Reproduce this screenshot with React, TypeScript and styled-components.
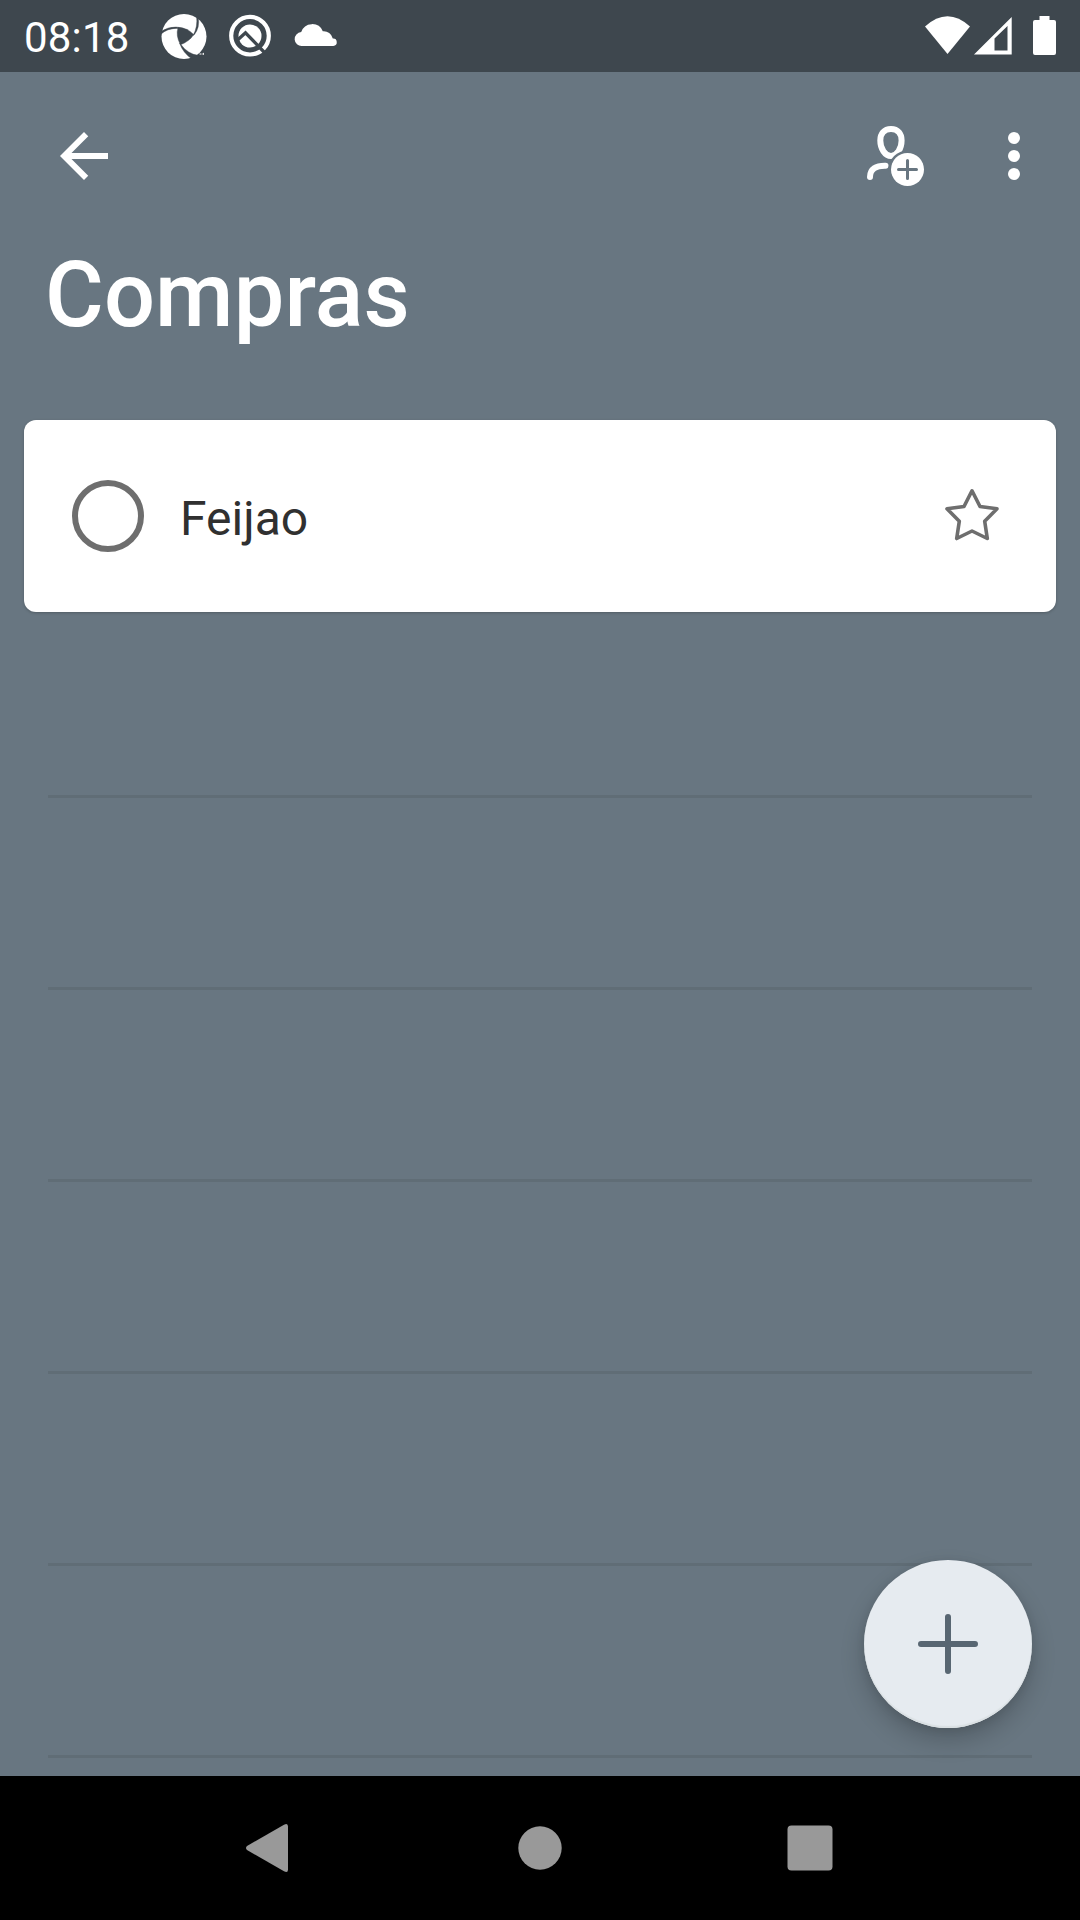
import React from "react";
import styled, { createGlobalStyle } from "styled-components";

const Global = createGlobalStyle`
  * { box-sizing: border-box; }
  body { margin: 0; }
`;

const Screen = styled.div`
  width: 1080px;
  height: 1920px;
  display: flex;
  flex-direction: column;
  position: relative;
  overflow: hidden;
  background: #687681;
  font-family: Roboto, "Noto Sans", sans-serif;
`;

const StatusBar = styled.header`
  height: 72px;
  flex: none;
  display: flex;
  align-items: center;
  justify-content: space-between;
  background: #3e474e;
  color: #fff;
`;

const StatusGroup = styled.div`
  display: flex;
  align-items: center;
  height: 72px;
`;

const Clock = styled.time`
  width: 136px;
  padding: 3px 0 0 24px;
  font-size: 42px;
  line-height: 50px;
  letter-spacing: 0.2px;
  white-space: nowrap;
`;

const Icon = styled.svg`
  display: block;
  flex: none;
`;

const Toolbar = styled.div`
  height: 168px;
  flex: none;
  display: flex;
  align-items: center;
  justify-content: space-between;
  padding: 0 30px 0 48px;
`;

const Actions = styled.div`
  display: flex;
  align-items: center;
  gap: 48px;
`;

const IconButton = styled.button`
  border: 0;
  padding: 0;
  background: none;
  color: inherit;
  display: flex;
`;

const Title = styled.h1`
  margin: 0;
  height: 180px;
  flex: none;
  padding: 3px 45px 0;
  color: #fff;
  font-size: 90px;
  line-height: 105px;
  font-weight: 500;
  letter-spacing: 0.15px;
`;

const TaskCard = styled.article`
  height: 192px;
  flex: none;
  margin: 0 24px;
  padding: 0 48px;
  display: flex;
  align-items: center;
  border-radius: 12px;
  background: #fff;
  box-shadow: 0 1px 3px rgba(0, 0, 0, 0.22);
`;

const Check = styled.span`
  width: 72px;
  height: 72px;
  border: 6px solid #6e6e6e;
  border-radius: 50%;
`;

const TaskName = styled.span`
  flex: 1;
  padding: 6px 0 0 36px;
  color: #303030;
  font-size: 48px;
  line-height: 56px;
`;

const Lines = styled.main`
  flex: 1;
  padding: 0 48px;
  overflow: hidden;
`;

const Line = styled.div<{ $first?: boolean }>`
  height: ${(p) => (p.$first ? 186 : 192)}px;
  border-bottom: 3px solid #606d76;
`;

const AddButton = styled.button`
  position: absolute;
  right: 48px;
  bottom: 192px;
  width: 168px;
  height: 168px;
  border: 0;
  padding: 0;
  border-radius: 50%;
  display: flex;
  align-items: center;
  justify-content: center;
  background: #e6ebf0;
  box-shadow: 0 12px 24px rgba(0, 0, 0, 0.2), 0 2px 10px rgba(0, 0, 0, 0.08), inset 0 -2px 1px #dae0e3;
`;

const NavBar = styled.nav`
  height: 144px;
  flex: none;
  display: flex;
  align-items: center;
  justify-content: center;
  gap: 198px;
  background: #000;
`;

export default function App() {
  return (
    <Screen>
      <Global />
      <StatusBar>
        <StatusGroup>
          <Clock>08:18</Clock>
          <Icon width="210" height="72" viewBox="136 0 210 72">
            <circle cx="184" cy="36.500" r="22.500" fill="#fff" />
            <g fill="#3e474e" stroke="#3e474e" strokeWidth="0.400">
              <path d="M178 27.500Q187 27.500 193.700 34.500Q190 41 180.500 44.800Q175.500 36 178 27.500Z" />
              <path d="M160.500 34.500Q168 27.500 179 28.500L188 30.500Q182 26.900 176 27Q168 26.700 161 31.500Z" />
              <path d="M196.500 16Q198 27 193 35.500L194.500 34.500Q200 27 198.300 18Z" />
              <path d="M179.500 43Q183 53 192 59L199 55.500Q188 54.500 180.500 44Z" />
            </g>
            <path d="M199.500 54h2M203 54.700v-1.400h.500v1.400" stroke="#fff" strokeWidth="1" />
            <circle cx="250" cy="35.700" r="18.800" fill="none" stroke="#fff" strokeWidth="4.200" />
            <circle cx="250" cy="36" r="11.500" fill="#fff" />
            <path d="M237 40.500l8.500-7.700L264.500 52.500" fill="none" stroke="#3e474e" strokeWidth="3.300" />
            <path d="M302 46a6.900 6.900 0 0 1-.8-13.900A11.500 11.500 0 0 1 322.800 31.300A9.200 9.200 0 0 1 332.800 38.600A3.700 3.700 0 0 1 333.300 46Z" fill="#fff" />
          </Icon>
        </StatusGroup>
        <Icon width="160" height="72" viewBox="920 0 160 72" fill="#fff">
          <path d="M925 26.500Q947.500 6 970 26.500L947.500 54Z" />
          <path fillRule="evenodd" d="M974 54.500L1011.700 17V54.500ZM994.500 38.500V50.500H1007.500V26Z" />
          <path d="M1039.500 20V16h10v4h4.500a2 2 0 0 1 2 2v31a2 2 0 0 1-2 2h-19a2 2 0 0 1-2-2V22a2 2 0 0 1 2-2Z" />
        </Icon>
      </StatusBar>
      <Toolbar>
        <IconButton aria-label="Back">
          <Icon width="72" height="72" viewBox="0 0 24 24" fill="#fff">
            <path d="M20 11H7.830l5.590-5.590L12 4l-8 8 8 8 1.410-1.410L7.830 13H20z" />
          </Icon>
        </IconButton>
        <Actions>
          <IconButton aria-label="Share">
            <Icon width="72" height="72" viewBox="858 120 72 72" fill="none">
              <g stroke="#fff" strokeWidth="6" strokeLinecap="round">
                <path d="M891 129C884 129 880.300 134 880.300 140.500C880.300 148.500 885 156 891 156C897 156 901.600 148.500 901.600 140.500C901.600 134 898 129 891 129Z" />
                <path d="M870 177C870 169 876 165.500 885.500 165.700" />
              </g>
              <circle cx="907.500" cy="169.500" r="19" fill="#687681" />
              <circle cx="907.500" cy="169.500" r="16.500" fill="#fff" />
              <path d="M898.500 169.500h18M907.500 160.500v18" stroke="#687681" strokeWidth="3" strokeLinecap="round" />
            </Icon>
          </IconButton>
          <IconButton aria-label="More options">
            <Icon width="72" height="72" viewBox="0 0 24 24" fill="#fff">
              <circle cx="12" cy="6" r="2" />
              <circle cx="12" cy="12" r="2" />
              <circle cx="12" cy="18" r="2" />
            </Icon>
          </IconButton>
        </Actions>
      </Toolbar>
      <Title>Compras</Title>
      <TaskCard>
        <Check />
        <TaskName>Feijao</TaskName>
        <Icon width="72" height="72" viewBox="936 480 72 72" fill="none">
          <path d="M972 490.800L980 506.500L997 508.800L984.700 521.300L987.300 538.500L972 531L956.700 538.500L959.300 521.300L947 508.800L964 506.500Z" stroke="#6e6e6e" strokeWidth="3.600" strokeLinejoin="round" />
        </Icon>
      </TaskCard>
      <Lines>
        <Line $first />
        <Line />
        <Line />
        <Line />
        <Line />
        <Line />
      </Lines>
      <AddButton aria-label="Add a task">
        <Icon width="60" height="60" viewBox="0 0 60 60">
          <path d="M3 30H57M30 3V57" stroke="#586672" strokeWidth="6" strokeLinecap="round" />
        </Icon>
      </AddButton>
      <NavBar>
        <Icon width="72" height="72" viewBox="234 1812 72 72" fill="#999">
          <path d="M247 1846L284 1824.700Q288 1822.500 288 1826.500V1869.500Q288 1873.500 284 1871.300L247 1850Q245 1848 247 1846Z" />
        </Icon>
        <Icon width="72" height="72" viewBox="0 0 72 72" fill="#999">
          <circle cx="36" cy="36" r="21.700" />
        </Icon>
        <Icon width="72" height="72" viewBox="0 0 72 72" fill="#999">
          <rect x="13.500" y="13.500" width="45" height="45" rx="4" />
        </Icon>
      </NavBar>
    </Screen>
  );
}
